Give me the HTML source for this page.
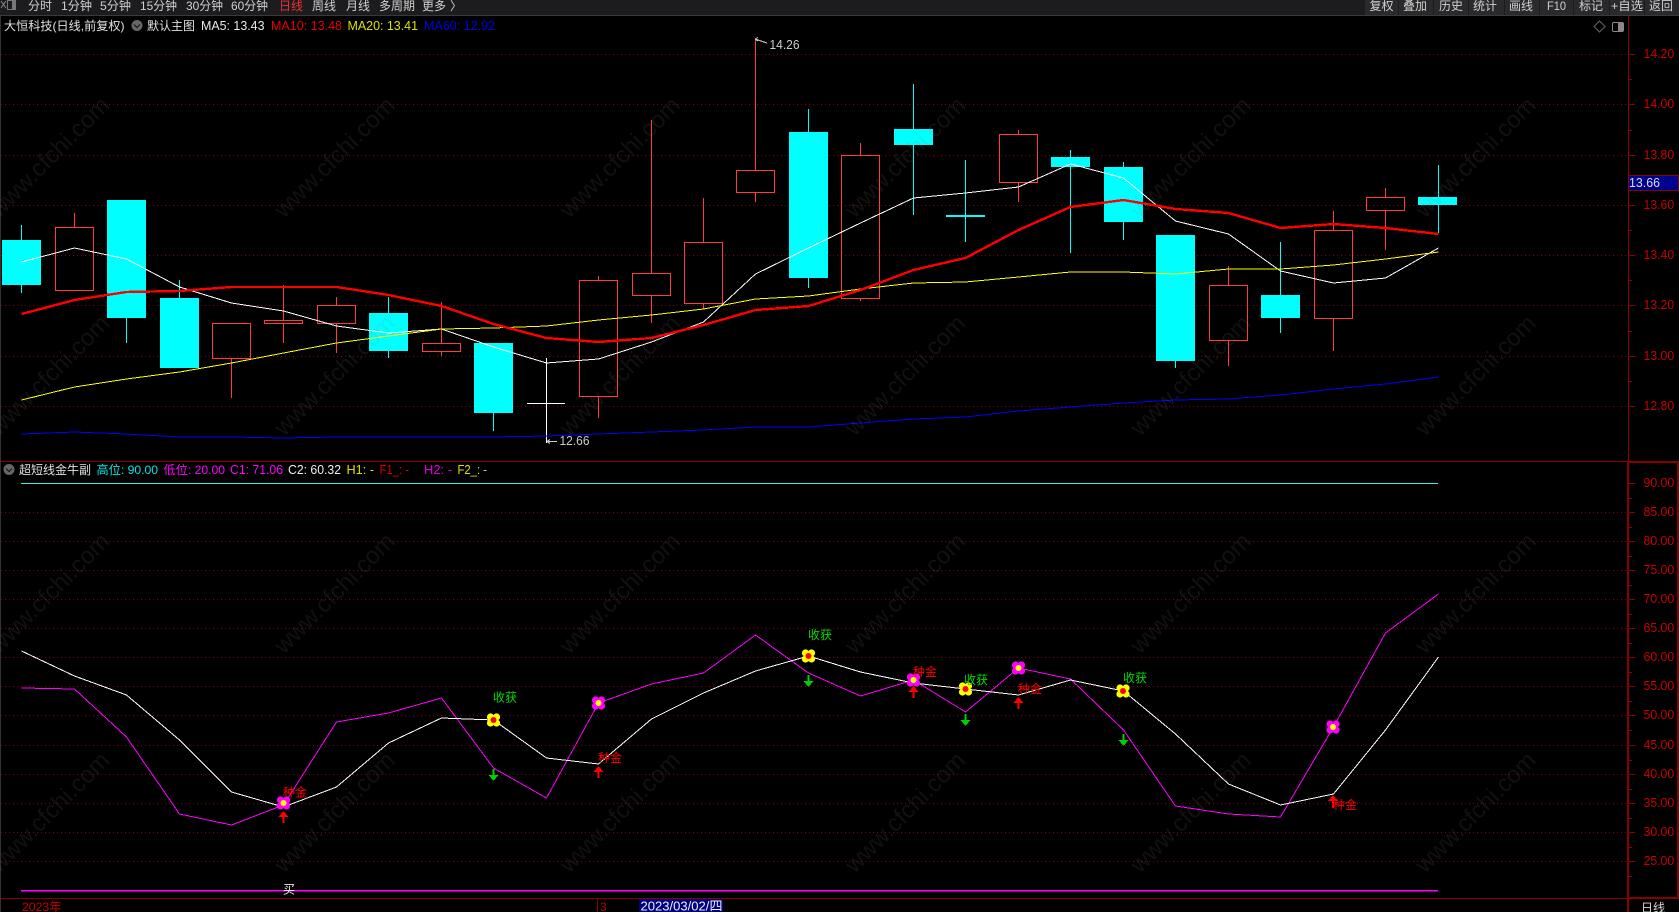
<!DOCTYPE html>
<html>
<head>
<meta charset="utf-8">
<title>大恒科技</title>
<style>
html,body{margin:0;padding:0;background:#000;width:1679px;height:912px;overflow:hidden}
svg{display:block;position:absolute;left:0;top:0}
text{font-family:"Liberation Sans","Noto Sans CJK SC",sans-serif;font-size:12px;white-space:pre}
.n{font-size:13px}
.ax{font-size:13px;fill:#c80000}
.tb{fill:#d0d0d0}
.wm{font-size:24px;fill:#808080;opacity:.13}
.g{stroke:#8c0000;stroke-width:1;stroke-dasharray:1 3;fill:none}
</style>
</head>
<body>
<svg width="1679" height="912" viewBox="0 0 1679 912" xmlns="http://www.w3.org/2000/svg">
<rect width="1679" height="912" fill="#000"/>
<rect x="0" y="0" width="1" height="912" fill="#333"/>

<!-- top bar -->
<rect x="0" y="0" width="1679" height="15" fill="#1c1c1e"/>
<rect x="0" y="15" width="1679" height="1" fill="#3a3a3a"/>
<g fill="#2a2a2c">
<rect x="1365" y="0" width="33" height="15"/><rect x="1399" y="0" width="34" height="15"/><rect x="1434" y="0" width="34" height="15"/><rect x="1469" y="0" width="35" height="15"/><rect x="1505" y="0" width="34" height="15"/><rect x="1540" y="0" width="33" height="15"/><rect x="1574" y="0" width="35" height="15"/><rect x="1610" y="0" width="34" height="15"/><rect x="1645" y="0" width="34" height="15"/>
</g>
<path d="M1 1L6 8M6 1L1 8" stroke="#888" fill="none"/>
<rect x="7.5" y="0.5" width="8" height="9" fill="none" stroke="#777"/><rect x="12" y="1" width="3" height="8" fill="#777"/>
<g class="tb">
<text x="28" y="10">分时</text>
<text x="61" y="10" textLength="31" lengthAdjust="spacingAndGlyphs">1分钟</text>
<text x="100" y="10" textLength="31" lengthAdjust="spacingAndGlyphs">5分钟</text>
<text x="140" y="10" textLength="37" lengthAdjust="spacingAndGlyphs">15分钟</text>
<text x="186" y="10" textLength="37" lengthAdjust="spacingAndGlyphs">30分钟</text>
<text x="231" y="10" textLength="37" lengthAdjust="spacingAndGlyphs">60分钟</text>
<text x="279" y="10" style="fill:#f03030">日线</text>
<text x="312" y="10">周线</text>
<text x="346" y="10">月线</text>
<text x="379" y="10">多周期</text>
<text x="422" y="10">更多</text>
<text x="450" y="10">〉</text>
<text x="1369.5" y="10">复权</text>
<text x="1403" y="10">叠加</text>
<text x="1439" y="10">历史</text>
<text x="1473" y="10">统计</text>
<text x="1509" y="10">画线</text>
<text x="1547" y="10" textLength="19" lengthAdjust="spacingAndGlyphs">F10</text>
<text x="1579" y="10">标记</text>
<text x="1611" y="10" textLength="32" lengthAdjust="spacingAndGlyphs">+自选</text>
<text x="1649" y="10">返回</text>
</g>

<!-- grid -->
<path class="g" d="M1 54.5H1628M1 104.5H1628M1 155.5H1628M1 205.5H1628M1 255.5H1628M1 305.5H1628M1 356.5H1628M1 406.5H1628"/>
<path class="g" d="M1 512.5H1628M1 541.5H1628M1 570.5H1628M1 599.5H1628M1 628.5H1628M1 657.5H1628M1 686.5H1628M1 715.5H1628M1 745.5H1628M1 774.5H1628M1 803.5H1628M1 832.5H1628M1 861.5H1628"/>

<!-- candles red -->
<g shape-rendering="crispEdges">
<path fill="none" stroke="#ff3c3c" d="M74.5 213V227M231.5 359V398M283.5 285V320M283.5 324V343M336.5 297V305M336.5 324V353M441.5 302V343M441.5 352V356M598.5 276V280M598.5 397V418M651.5 120V273M651.5 296V323M703.5 198V242M703.5 304V309M755.5 39V170M755.5 193V202M860.5 143V155M860.5 299V301M1018.5 130V134M1018.5 183V202M1228.5 266V285M1228.5 341V366M1333.5 211V230M1333.5 319V351M1385.5 188V197M1385.5 211V250"/>
<g fill="none" stroke="#ff3c3c">
<rect x="55.5" y="227.5" width="38" height="63"/>
<rect x="212.5" y="323.5" width="38" height="35"/>
<rect x="264.5" y="320.5" width="38" height="3"/>
<rect x="317.5" y="305.5" width="38" height="18"/>
<rect x="422.5" y="343.5" width="38" height="8"/>
<rect x="579.5" y="280.5" width="38" height="116"/>
<rect x="632.5" y="273.5" width="38" height="22"/>
<rect x="684.5" y="242.5" width="38" height="61"/>
<rect x="736.5" y="170.5" width="38" height="22"/>
<rect x="841.5" y="155.5" width="38" height="143"/>
<rect x="999.5" y="134.5" width="38" height="48"/>
<rect x="1209.5" y="285.5" width="38" height="55"/>
<rect x="1314.5" y="230.5" width="38" height="88"/>
<rect x="1366.5" y="197.5" width="38" height="13"/>
</g>
<!-- candles cyan -->
<path fill="none" stroke="#0ff" d="M21.5 225V240M21.5 285V293M126.5 318V343M179.5 280V298M388.5 297V313M388.5 351V358M493.5 413V431M808.5 109V132M808.5 278V288M913.5 84V129M913.5 145V215M965.5 160V242M1070.5 150V157M1070.5 167V253M1123.5 162V167M1123.5 222V240M1175.5 361V368M1280.5 242V295M1280.5 318V333M1438.5 165V197M1438.5 205V233"/>
<g fill="#0ff">
<rect x="2" y="240" width="39" height="45"/>
<rect x="107" y="200" width="39" height="118"/>
<rect x="160" y="298" width="39" height="70"/>
<rect x="369" y="313" width="39" height="38"/>
<rect x="474" y="343" width="39" height="70"/>
<rect x="789" y="132" width="39" height="146"/>
<rect x="894" y="129" width="39" height="16"/>
<rect x="946" y="215" width="39" height="2"/>
<rect x="1051" y="157" width="39" height="10"/>
<rect x="1104" y="167" width="39" height="55"/>
<rect x="1156" y="235" width="39" height="126"/>
<rect x="1261" y="295" width="39" height="23"/>
<rect x="1418" y="197" width="39" height="8"/>
</g>
<!-- white cross -->
<path fill="none" stroke="#fff" d="M546.5 358V443M527 403.5H565"/>
</g>

<!-- MA lines -->
<g fill="none" shape-rendering="crispEdges" stroke-linejoin="round">
<polyline stroke="#fff" points="21.5,262 74.5,248 126.5,259 179.5,287 231.5,303 283.5,311 336.5,326 388.5,333 441.5,329 493.5,347 546.5,363 598.5,359 651.5,342 703.5,322 755.5,274 808.5,248 860.5,223 913.5,198 965.5,193 1018.5,187 1070.5,164 1123.5,178 1175.5,221 1228.5,234 1280.5,271 1333.5,283 1385.5,278 1438.5,248"/>
<polyline stroke="#ff0" points="21.5,400 74.5,387 126.5,379 179.5,372 231.5,363 283.5,353 336.5,343 388.5,336 441.5,329 493.5,328 546.5,326 598.5,320 651.5,315 703.5,309 755.5,299 808.5,296 860.5,289 913.5,283 965.5,282 1018.5,277 1070.5,272 1123.5,272 1175.5,274 1228.5,269 1280.5,269 1333.5,265 1385.5,259 1438.5,252"/>
<polyline stroke="#00f" points="21.5,434 74.5,432 126.5,434 179.5,437 231.5,437 283.5,438 336.5,437 388.5,437 441.5,437 493.5,437 546.5,436 598.5,434 651.5,432 703.5,430 755.5,427 808.5,427 860.5,423 913.5,419 965.5,417 1018.5,411 1070.5,407 1123.5,403 1175.5,400 1228.5,399 1280.5,395 1333.5,389 1385.5,384 1438.5,377"/>
<polyline stroke="#f00" stroke-width="2.4" points="21.5,314 74.5,300 126.5,292 179.5,291 231.5,287 283.5,287 336.5,287 388.5,295 441.5,306 493.5,324 546.5,338 598.5,342 651.5,338 703.5,325 755.5,310 808.5,306 860.5,290 913.5,270 965.5,258 1018.5,230 1070.5,207 1123.5,200 1175.5,209 1228.5,213 1280.5,228 1333.5,224 1385.5,228 1438.5,234"/>
</g>

<!-- annotations -->
<path d="M755 39L767 43M755 39l3 -1.5M755 39l3 2" stroke="#ccc" fill="none" shape-rendering="crispEdges"/>
<text class="n" x="769.5" y="49" fill="#ccc" textLength="30" lengthAdjust="spacingAndGlyphs">14.26</text>
<path d="M547 441.5H557M547 441.5l3 -2M547 441.5l3 2" stroke="#ccc" fill="none" shape-rendering="crispEdges"/>
<text class="n" x="559.5" y="445" fill="#ccc" textLength="30" lengthAdjust="spacingAndGlyphs">12.66</text>

<!-- header main -->
<text x="4" y="30" fill="#e0e0e0" textLength="120.5" lengthAdjust="spacingAndGlyphs">大恒科技(日线,前复权)</text>
<circle cx="137" cy="25.5" r="5.5" fill="#666"/><path d="M134 24.5l3 3 3 -3" stroke="#1a1a1a" stroke-width="1.2" fill="none"/>
<text x="147" y="30" fill="#e0e0e0">默认主图</text>
<text class="n" x="201" y="30" fill="#e8e8e8" textLength="63.5" lengthAdjust="spacingAndGlyphs">MA5: 13.43</text>
<text class="n" x="271" y="30" fill="#e60000" textLength="71" lengthAdjust="spacingAndGlyphs">MA10: 13.48</text>
<text class="n" x="347.5" y="30" fill="#e0e000" textLength="70.5" lengthAdjust="spacingAndGlyphs">MA20: 13.41</text>
<text class="n" x="424" y="30" fill="#0000e6" textLength="71" lengthAdjust="spacingAndGlyphs">MA60: 12.92</text>

<!-- icons top-right -->
<path d="M1599.5 21l5.5 5.5 -5.5 5.5 -5.5 -5.5z" fill="none" stroke="#666"/>
<rect x="1612.5" y="22.5" width="11" height="9" rx="1.5" fill="none" stroke="#888"/><rect x="1618" y="23" width="5" height="8" fill="#888"/>

<!-- axes -->
<g shape-rendering="crispEdges">
<rect x="1628" y="16" width="1" height="445" fill="#8a0000"/>
<rect x="1627" y="461" width="2" height="451" fill="#8a0000"/>
<rect x="1" y="461" width="1627" height="1" fill="#8a0000"/>
<rect x="1628" y="461" width="51" height="2" fill="#8a0000"/>
<rect x="1677" y="461" width="2" height="437" fill="#8a0000"/>
<rect x="1" y="898" width="1678" height="1" fill="#8a0000"/>
<rect x="1628" y="897" width="51" height="2" fill="#8a0000"/>
<path stroke="#8a0000" fill="none" d="M1629 54.5h6M1629 104.5h6M1629 155.5h6M1629 205.5h6M1629 255.5h6M1629 305.5h6M1629 356.5h6M1629 406.5h6M1629 79.5h3M1629 130.5h3M1629 180.5h3M1629 230.5h3M1629 280.5h3M1629 331.5h3M1629 381.5h3"/>
<path stroke="#8a0000" fill="none" d="M1629 483.5h6M1629 512.5h6M1629 541.5h6M1629 570.5h6M1629 599.5h6M1629 628.5h6M1629 657.5h6M1629 686.5h6M1629 715.5h6M1629 745.5h6M1629 774.5h6M1629 803.5h6M1629 832.5h6M1629 861.5h6M1629 498.5h3M1629 527.5h3M1629 556.5h3M1629 585.5h3M1629 614.5h3M1629 643.5h3M1629 672.5h3M1629 701.5h3M1629 730.5h3M1629 760.5h3M1629 789.5h3M1629 818.5h3M1629 847.5h3M1629 876.5h3"/>
</g>
<g>
<text class="ax" x="1643.5" y="58" textLength="30.7" lengthAdjust="spacingAndGlyphs">14.20</text>
<text class="ax" x="1643.5" y="108" textLength="30.7" lengthAdjust="spacingAndGlyphs">14.00</text>
<text class="ax" x="1643.5" y="159" textLength="30.7" lengthAdjust="spacingAndGlyphs">13.80</text>
<text class="ax" x="1643.5" y="209" textLength="30.7" lengthAdjust="spacingAndGlyphs">13.60</text>
<text class="ax" x="1643.5" y="259" textLength="30.7" lengthAdjust="spacingAndGlyphs">13.40</text>
<text class="ax" x="1643.5" y="309" textLength="30.7" lengthAdjust="spacingAndGlyphs">13.20</text>
<text class="ax" x="1643.5" y="360" textLength="30.7" lengthAdjust="spacingAndGlyphs">13.00</text>
<text class="ax" x="1643.5" y="410" textLength="30.7" lengthAdjust="spacingAndGlyphs">12.80</text>
<text class="ax" x="1643.5" y="487" textLength="30.7" lengthAdjust="spacingAndGlyphs">90.00</text>
<text class="ax" x="1643.5" y="516" textLength="30.7" lengthAdjust="spacingAndGlyphs">85.00</text>
<text class="ax" x="1643.5" y="545" textLength="30.7" lengthAdjust="spacingAndGlyphs">80.00</text>
<text class="ax" x="1643.5" y="574" textLength="30.7" lengthAdjust="spacingAndGlyphs">75.00</text>
<text class="ax" x="1643.5" y="603" textLength="30.7" lengthAdjust="spacingAndGlyphs">70.00</text>
<text class="ax" x="1643.5" y="632" textLength="30.7" lengthAdjust="spacingAndGlyphs">65.00</text>
<text class="ax" x="1643.5" y="661" textLength="30.7" lengthAdjust="spacingAndGlyphs">60.00</text>
<text class="ax" x="1643.5" y="690" textLength="30.7" lengthAdjust="spacingAndGlyphs">55.00</text>
<text class="ax" x="1643.5" y="719" textLength="30.7" lengthAdjust="spacingAndGlyphs">50.00</text>
<text class="ax" x="1643.5" y="749" textLength="30.7" lengthAdjust="spacingAndGlyphs">45.00</text>
<text class="ax" x="1643.5" y="778" textLength="30.7" lengthAdjust="spacingAndGlyphs">40.00</text>
<text class="ax" x="1643.5" y="807" textLength="30.7" lengthAdjust="spacingAndGlyphs">35.00</text>
<text class="ax" x="1643.5" y="836" textLength="30.7" lengthAdjust="spacingAndGlyphs">30.00</text>
<text class="ax" x="1643.5" y="865" textLength="30.7" lengthAdjust="spacingAndGlyphs">25.00</text>
</g>
<rect x="1628.5" y="175.5" width="50" height="15" fill="#000090" stroke="#8a0000" shape-rendering="crispEdges"/>
<text class="n" x="1629" y="187" fill="#ddd" textLength="31" lengthAdjust="spacingAndGlyphs">13.66</text>
<text x="1641" y="912" fill="#d8d8d8">日线</text>

<!-- sub header -->
<circle cx="9" cy="469.5" r="5.5" fill="#666"/><path d="M6 468.5l3 3 3 -3" stroke="#1a1a1a" stroke-width="1.2" fill="none"/>
<text x="19" y="474" fill="#e0e0e0">超短线金牛副</text>
<text x="96.5" y="474" fill="#00e6e6" textLength="61.5" lengthAdjust="spacingAndGlyphs">高位: 90.00</text>
<text x="163.5" y="474" fill="#f0f" textLength="61.5" lengthAdjust="spacingAndGlyphs">低位: 20.00</text>
<text class="n" x="230" y="474" fill="#f0f" textLength="53" lengthAdjust="spacingAndGlyphs">C1: 71.06</text>
<text class="n" x="288" y="474" fill="#eee" textLength="53" lengthAdjust="spacingAndGlyphs">C2: 60.32</text>
<text class="n" x="346.5" y="474" fill="#e0e000" textLength="27.5" lengthAdjust="spacingAndGlyphs">H1: -</text>
<text class="n" x="379.5" y="474" fill="#d80000" textLength="29.5" lengthAdjust="spacingAndGlyphs">F1_: -</text>
<text class="n" x="424" y="474" fill="#e000e0" textLength="28" lengthAdjust="spacingAndGlyphs">H2: -</text>
<text class="n" x="457.5" y="474" fill="#e0e000" textLength="29.5" lengthAdjust="spacingAndGlyphs">F2_: -</text>

<!-- sub lines -->
<g fill="none" shape-rendering="crispEdges" stroke-linejoin="round">
<path stroke="#3ee" d="M21 483.5H1438"/>
<rect x="21" y="890" width="1417" height="1.5" fill="#f0f" stroke="none"/>
<polyline stroke="#f0f" points="21.5,688 74.5,689 126.5,737 179.5,814 231.5,825 283.5,805 336.5,722 388.5,713 441.5,698 493.5,768 546.5,798 598.5,703 651.5,684 703.5,673 755.5,635 808.5,673 860.5,696 913.5,680 965.5,712 1018.5,668 1070.5,679 1123.5,730 1175.5,806 1228.5,814 1280.5,817 1333.5,727 1385.5,633 1438.5,594"/>
<polyline stroke="#fff" points="21.5,651 74.5,676 126.5,695 179.5,740 231.5,792 283.5,807 336.5,787 388.5,743 441.5,718 493.5,720 546.5,758 598.5,764 651.5,719 703.5,693 755.5,671 808.5,656 860.5,672 913.5,683 965.5,689 1018.5,695 1070.5,680 1123.5,691 1175.5,734 1228.5,784 1280.5,805 1333.5,794 1385.5,730 1438.5,657"/>
</g>

<!-- flowers -->
<defs>
<g id="pf"><circle cx="-3" cy="-3" r="3.6" fill="#f0f"/><circle cx="3" cy="-3" r="3.6" fill="#f0f"/><circle cx="-3" cy="3" r="3.6" fill="#f0f"/><circle cx="3" cy="3" r="3.6" fill="#f0f"/><rect x="-4" y="-4" width="8" height="8" fill="#f0f"/><circle r="3" fill="#ff0"/></g>
<g id="yf"><circle cx="-3" cy="-3" r="3.6" fill="#ff0"/><circle cx="3" cy="-3" r="3.6" fill="#ff0"/><circle cx="-3" cy="3" r="3.6" fill="#ff0"/><circle cx="3" cy="3" r="3.6" fill="#ff0"/><rect x="-4" y="-4" width="8" height="8" fill="#ff0"/><circle r="3" fill="#f00"/></g>
</defs>
<use href="#pf" x="283.5" y="803"/>
<use href="#pf" x="598.5" y="703"/>
<use href="#pf" x="913.5" y="680"/>
<use href="#pf" x="1018.5" y="668"/>
<use href="#pf" x="1333" y="727"/>
<use href="#yf" x="493.5" y="720"/>
<use href="#yf" x="808.5" y="656"/>
<use href="#yf" x="965.5" y="689"/>
<use href="#yf" x="1123" y="691"/>

<!-- arrows -->
<g fill="#f00" shape-rendering="crispEdges">
<path d="M283.5 811l5 6h-4v6h-2v-6h-4z"/>
<path d="M598.5 766l5 6h-4v6h-2v-6h-4z"/>
<path d="M913.5 686l5 6h-4v6h-2v-6h-4z"/>
<path d="M1018.5 697l5 6h-4v6h-2v-6h-4z"/>
<path d="M1333 795l5 6h-4v7h-2v-7h-4z"/>
</g>
<g fill="#00d000" shape-rendering="crispEdges">
<path d="M493.5 781l5 -6h-4v-6h-2v6h-4z"/>
<path d="M808.5 687l5 -6h-4v-6h-2v6h-4z"/>
<path d="M965.5 726l5 -6h-4v-6h-2v6h-4z"/>
<path d="M1123.5 746l5 -6h-4v-6h-2v6h-4z"/>
</g>

<!-- labels -->
<g fill="#f00">
<text x="283" y="796.5">种金</text>
<text x="598" y="762">种金</text>
<text x="913" y="676">种金</text>
<text x="1018" y="693">种金</text>
<text x="1333" y="809">种金</text>
</g>
<g fill="#00dc00">
<text x="493" y="701.5">收获</text>
<text x="808" y="639">收获</text>
<text x="964" y="684">收获</text>
<text x="1123" y="682">收获</text>
</g>
<text x="283" y="893.5" fill="#eee">买</text>

<!-- bottom -->
<text x="22" y="911" fill="#c80000" textLength="39.5" lengthAdjust="spacingAndGlyphs">2023年</text>
<rect x="597" y="899" width="1" height="13" fill="#8a0000"/>
<text x="600" y="911" fill="#c80000">3</text>
<rect x="639" y="899" width="84" height="13" fill="#000080"/>
<text class="n" x="640.5" y="910.5" fill="#eee" textLength="82" lengthAdjust="spacingAndGlyphs">2023/03/02/四</text>

<!-- watermark -->
<g transform="translate(-2,3)">
<text class="wm" transform="translate(0.7,216) rotate(-45)">www.cfchi.com</text>
<text class="wm" transform="translate(286,216) rotate(-45)">www.cfchi.com</text>
<text class="wm" transform="translate(571.3,216) rotate(-45)">www.cfchi.com</text>
<text class="wm" transform="translate(856.6,216) rotate(-45)">www.cfchi.com</text>
<text class="wm" transform="translate(1142,216) rotate(-45)">www.cfchi.com</text>
<text class="wm" transform="translate(1427,216) rotate(-45)">www.cfchi.com</text>
<text class="wm" transform="translate(0.7,434) rotate(-45)">www.cfchi.com</text>
<text class="wm" transform="translate(286,434) rotate(-45)">www.cfchi.com</text>
<text class="wm" transform="translate(571.3,434) rotate(-45)">www.cfchi.com</text>
<text class="wm" transform="translate(856.6,434) rotate(-45)">www.cfchi.com</text>
<text class="wm" transform="translate(1142,434) rotate(-45)">www.cfchi.com</text>
<text class="wm" transform="translate(1427,434) rotate(-45)">www.cfchi.com</text>
<text class="wm" transform="translate(0.7,652) rotate(-45)">www.cfchi.com</text>
<text class="wm" transform="translate(286,652) rotate(-45)">www.cfchi.com</text>
<text class="wm" transform="translate(571.3,652) rotate(-45)">www.cfchi.com</text>
<text class="wm" transform="translate(856.6,652) rotate(-45)">www.cfchi.com</text>
<text class="wm" transform="translate(1142,652) rotate(-45)">www.cfchi.com</text>
<text class="wm" transform="translate(1427,652) rotate(-45)">www.cfchi.com</text>
<text class="wm" transform="translate(0.7,871) rotate(-45)">www.cfchi.com</text>
<text class="wm" transform="translate(286,871) rotate(-45)">www.cfchi.com</text>
<text class="wm" transform="translate(571.3,871) rotate(-45)">www.cfchi.com</text>
<text class="wm" transform="translate(856.6,871) rotate(-45)">www.cfchi.com</text>
<text class="wm" transform="translate(1142,871) rotate(-45)">www.cfchi.com</text>
<text class="wm" transform="translate(1427,871) rotate(-45)">www.cfchi.com</text>
</g>
</svg>
</body>
</html>
